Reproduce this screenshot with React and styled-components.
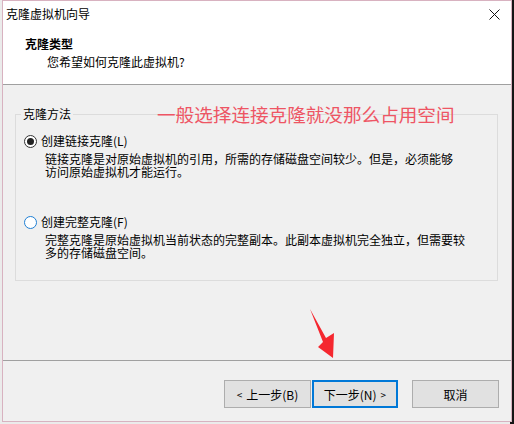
import React from "react";
import styled, { createGlobalStyle } from "styled-components";

const GlobalStyle = createGlobalStyle`
  html, body {
    margin: 0;
    padding: 0;
    width: 514px;
    height: 424px;
    overflow: hidden;
  }
  body {
    font-family: "Noto Sans CJK SC", "Noto Sans", sans-serif;
    font-size: 12px;
    color: #000;
    background: linear-gradient(to right, #ebebeb 168px, #151515 168px);
  }
`;

const Desktop = styled.div`
  display: flex;
  padding-left: 2px;
  height: 424px;
  background: linear-gradient(to right, #ebebeb 510px, #151515 510px);
`;

const Window = styled.div`
  position: relative;
  width: 508px;
  height: 420px;
  border: 1px solid #d8b2c0;
  background: #f0f0f0;
  display: flex;
  flex-direction: column;
`;

const TitleBar = styled.div`
  height: 26px;
  display: flex;
  align-items: center;
  justify-content: space-between;
  padding: 0 11px 0 3px;
  background: #fff;
  line-height: 16px;
`;

const CloseButton = styled.svg`
  width: 11px;
  height: 11px;
  stroke: #111;
  stroke-width: 1;
`;

const Header = styled.div`
  background: #fff;
  border-bottom: 1px solid #a0a0a0;
  padding: 9px 0 0 22px;
  box-sizing: border-box;
  height: 58px;
`;

const HeaderTitle = styled.div`
  font-weight: 700;
  line-height: 16px;
`;

const HeaderSub = styled.div`
  line-height: 16px;
  margin: 2px 0 0 22px;
`;

const Body = styled.div`
  flex: 1;
  padding: 22px 13px 0 12px;
  border-bottom: 1px solid #a0a0a0;
`;

const Group = styled.fieldset`
  margin: 0;
  padding: 0 0 0 8px;
  height: 174px;
  box-sizing: border-box;
  border: 1px solid #dcdcdc;
  min-inline-size: 0;
`;

const Legend = styled.legend`
  margin-left: -3px;
  padding: 0 2px;
  line-height: 14px;
`;

const Option = styled.div`
  margin-top: ${(p) => p.$top}px;
`;

const OptionLabel = styled.label`
  display: flex;
  align-items: center;
  gap: 4px;
  line-height: 16px;
`;

const Radio = styled.span`
  width: 11px;
  height: 11px;
  border-radius: 50%;
  background: #fff;
  border: 1px solid ${(p) => (p.$checked ? "#333" : "#1f7fd4")};
  display: flex;
  align-items: center;
  justify-content: center;
  &::after {
    content: "";
    width: 7px;
    height: 7px;
    border-radius: 50%;
    background: ${(p) => (p.$checked ? "#222" : "transparent")};
  }
`;

const Description = styled.p`
  margin: 3px 0 0 21px;
  line-height: 13px;
  width: ${(p) => p.$width}px;
`;

const Footer = styled.div`
  height: 60px;
  display: flex;
  align-items: flex-start;
  justify-content: flex-end;
  padding: 19px 12px 0 0;
  box-sizing: border-box;
`;

const Button = styled.button`
  width: ${(p) => (p.$focused ? "86px" : "87px")};
  height: 28px;
  margin-left: ${(p) => p.$gap}px;
  font-family: inherit;
  font-size: 12px;
  color: #000;
  background: #e1e1e1;
  border: ${(p) => (p.$focused ? "2px solid #0078d7" : "1px solid #adadad")};
  padding: 0;
  display: flex;
  align-items: center;
  justify-content: center;
  gap: 4px;
`;

const Chevron = styled.span`
  font-size: 10px;
`;

const Annotation = styled.div`
  position: absolute;
  left: 154px;
  top: 101px;
  font-family: "Noto Sans CJK SC", serif;
  font-size: 18.6px;
  line-height: 24px;
  color: #ee5564;
  white-space: nowrap;
`;

const Arrow = styled.svg`
  position: absolute;
  left: 303px;
  top: 307px;
  width: 30px;
  height: 52px;
`;

export default function App() {
  return (
    <>
      <GlobalStyle />
      <Desktop>
        <Window>
          <TitleBar>
            <span>克隆虚拟机向导</span>
            <CloseButton viewBox="0 0 11 11">
              <line x1="0.5" y1="0.5" x2="10.5" y2="10.5" />
              <line x1="10.5" y1="0.5" x2="0.5" y2="10.5" />
            </CloseButton>
          </TitleBar>
          <Header>
            <HeaderTitle>克隆类型</HeaderTitle>
            <HeaderSub>您希望如何克隆此虚拟机?</HeaderSub>
          </Header>
          <Body>
            <Group>
              <Legend>克隆方法</Legend>
              <Option $top={12}>
                <OptionLabel>
                  <Radio $checked />
                  创建链接克隆(L)
                </OptionLabel>
                <Description $width={410}>
                  链接克隆是对原始虚拟机的引用，所需的存储磁盘空间较少。但是，必须能够访问原始虚拟机才能运行。
                </Description>
              </Option>
              <Option $top={36}>
                <OptionLabel>
                  <Radio />
                  创建完整克隆(F)
                </OptionLabel>
                <Description $width={422}>
                  完整克隆是原始虚拟机当前状态的完整副本。此副本虚拟机完全独立，但需要较多的存储磁盘空间。
                </Description>
              </Option>
            </Group>
          </Body>
          <Footer>
            <Button $gap={0}>
              <Chevron>&lt;</Chevron>上一步(B)
            </Button>
            <Button $gap={1} $focused>
              下一步(N)<Chevron>&gt;</Chevron>
            </Button>
            <Button $gap={14}>取消</Button>
          </Footer>
          <Annotation>一般选择连接克隆就没那么占用空间</Annotation>
          <Arrow viewBox="303 307 30 52">
            <polygon
              points="307,308 323,337 331,332 330,357 315,346 320,341"
              fill="#f5272f"
            />
          </Arrow>
        </Window>
      </Desktop>
    </>
  );
}
